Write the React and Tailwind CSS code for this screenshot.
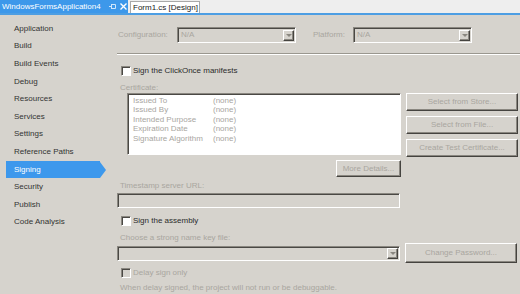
import React from 'react';

const NAV = [
  'Application',
  'Build',
  'Build Events',
  'Debug',
  'Resources',
  'Services',
  'Settings',
  'Reference Paths',
  'Signing',
  'Security',
  'Publish',
  'Code Analysis',
];

const CERT = [
  ['Issued To', '(none)'],
  ['Issued By', '(none)'],
  ['Intended Purpose', '(none)'],
  ['Expiration Date', '(none)'],
  ['Signature Algorithm', '(none)'],
];

/* sunken 3D edge, classic style */
const sunken =
  'border border-t-[#8a8780] border-l-[#8a8780] border-b-white border-r-white shadow-[inset_1px_1px_0_#4a4844]';
/* raised button edge */
const raised =
  'border border-t-white border-l-white border-b-[#45433f] border-r-[#45433f] shadow-[inset_-1px_-1px_0_#8a8780]';

const DropButton = () => (
  <div className={`flex h-[11px] w-[11px] items-center justify-center bg-[#d6d3cd] ${raised}`}>
    <div className="h-0 w-0 border-x-[3px] border-t-[3px] border-x-transparent border-t-[#8a8780]" />
  </div>
);

const Combo = ({ className = '', text }) => (
  <div className={`flex items-center justify-between pl-[3px] pr-[1px] ${sunken} ${className}`}>
    <span className="text-[#a9a69f]">{text}</span>
    <DropButton />
  </div>
);

const Button = ({ children, className = '' }) => (
  <div className={`flex items-center justify-center whitespace-nowrap text-[#a9a69f] ${raised} ${className}`}>
    {children}
  </div>
);

const Check = ({ label, disabled, className = '' }) => (
  <div className={`flex h-[10px] items-center gap-[2px] pl-1 ${className}`}>
    <div className={`h-[10px] w-[10px] shrink-0 ${sunken} ${disabled ? 'bg-[#d6d3cd]' : 'bg-white'}`} />
    <span className={disabled ? 'text-[#a9a69f]' : 'text-[#2b2b2b]'}>{label}</span>
  </div>
);

const Label = ({ children, className = '' }) => (
  <div className={`flex h-[10px] items-center whitespace-nowrap pl-[3px] ${className}`}>{children}</div>
);

export default function App() {
  return (
    <div
      className="flex h-[294px] w-[520px] flex-col overflow-hidden bg-[#d6d3cd] text-[8px] leading-none"
      style={{ fontFamily: '"Liberation Sans", Arial, sans-serif' }}
    >
      {/* ── Tab strip ── */}
      <div className="flex h-[13px] shrink-0 items-end bg-[#eeeeee]">
        <div className="flex h-[13px] w-[128px] items-center whitespace-nowrap bg-[#3d98ea] pl-[2px] text-white">
          <span>WindowsFormsApplication4</span>
          <svg className="ml-[8px]" width="7" height="7" viewBox="0 0 7 7">
            <path d="M0 3.5h2.5M2.5 1v5M2.5 1.5h4M2.5 5.5h4M6.5 1.5v4" stroke="#cfe6fb" strokeWidth="1" fill="none" />
          </svg>
          <svg className="ml-[4px]" width="7" height="7" viewBox="0 0 7 7">
            <path d="M0.5 0.5l6 6M6.5 0.5l-6 6" stroke="white" strokeWidth="1.4" />
          </svg>
        </div>
        <div className="ml-[2px] flex h-[12px] w-[70px] items-center whitespace-nowrap border border-b-0 border-[#a9a9a9] bg-white pl-[2px] text-[#1a1a1a]">
          Form1.cs [Design]
        </div>
      </div>
      <div className="h-[2px] shrink-0 bg-[#4d9ee3]" />

      <div className="flex flex-1">
        {/* ── Left nav ── */}
        <div className="flex w-[107px] shrink-0 flex-col pt-[5px]">
          {NAV.map((item) =>
            item === 'Signing' ? (
              <div key={item} className="flex h-[17.6px] items-center">
                <div className="ml-[6px] flex h-[17px] w-[94px] items-center bg-[#3d98ec] pl-2 text-white">{item}</div>
                <div className="h-0 w-0 border-y-[8.5px] border-l-[6px] border-y-transparent border-l-[#3d98ec]" />
              </div>
            ) : (
              <div key={item} className="flex h-[17.6px] items-center pl-[14px] text-[#333333]">
                {item}
              </div>
            ),
          )}
        </div>

        {/* ── Signing page ── */}
        <div className="flex flex-1 flex-col pl-[10px] pt-3 text-[#a9a69f]">
          <div className="flex h-4 items-center">
            <span className="w-[60px] pl-px">Configuration:</span>
            <Combo className="h-4 w-[119px]" text="N/A" />
            <span className="ml-[17px] w-[40px]">Platform:</span>
            <Combo className="h-4 w-[119px]" text="N/A" />
          </div>

          <div className="mt-[10px] h-[2px] border-t border-b border-t-[#9a978f] border-b-white" />

          <Check className="mt-[11px]" label="Sign the ClickOnce manifests" />
          <Label className="mt-[7px]">Certificate:</Label>

          <div className="flex">
            <div className="flex w-[289px] flex-col">
              <div className={`ml-[10px] flex h-[62px] w-[274px] flex-col bg-white pl-[5px] pt-[2px] ${sunken}`}>
                {CERT.map(([k, v]) => (
                  <div key={k} className="flex h-[9.5px] items-center">
                    <span className="w-[80px]">{k}</span>
                    <span>{v}</span>
                  </div>
                ))}
              </div>
              <div className="mt-[5px] flex justify-end pr-[5px]">
                <Button className="h-[17px] w-[65px]">More Details...</Button>
              </div>
            </div>
            <div className="flex flex-col gap-[5px]">
              <Button className="h-[18px] w-[112px]">Select from Store...</Button>
              <Button className="h-[18px] w-[112px]">Select from File...</Button>
              <Button className="h-[18px] w-[112px]">Create Test Certificate...</Button>
            </div>
          </div>

          <Label className="mt-[4px]">Timestamp server URL:</Label>
          <div className={`mt-[2px] h-[15px] w-[283px] ${sunken}`} />

          <Check className="mt-[8px]" label="Sign the assembly" />
          <Label className="mt-[7px]">Choose a strong name key file:</Label>

          <div className="flex h-5 items-center">
            <Combo className="h-[15px] w-[283px]" text="" />
            <Button className="ml-[5px] h-5 w-[112px]">Change Password...</Button>
          </div>

          <Check className="mt-[5px]" label="Delay sign only" disabled />
          <Label className="mt-[5px]">When delay signed, the project will not run or be debuggable.</Label>
        </div>
      </div>
    </div>
  );
}
